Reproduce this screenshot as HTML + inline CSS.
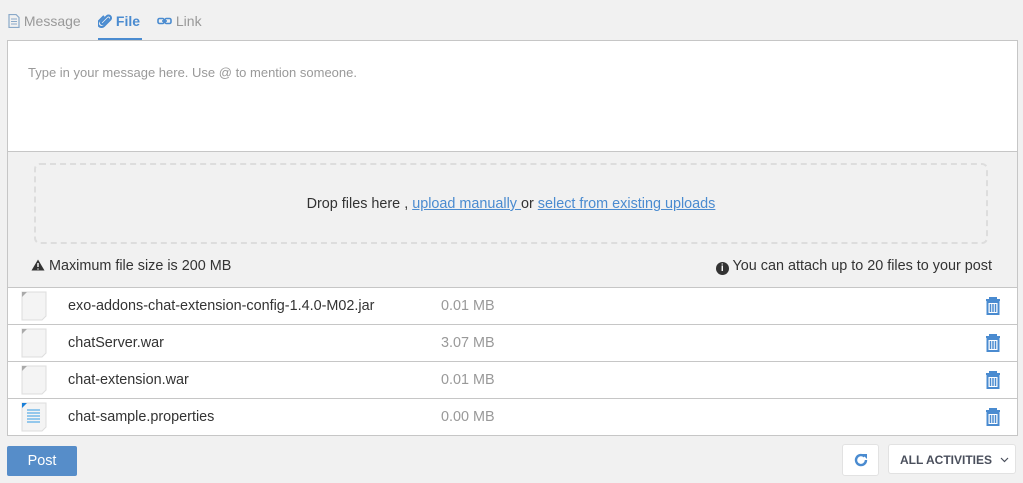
<!DOCTYPE html>
<html><head><style>
body{margin:0;background:#f1f1f1;font-family:"Liberation Sans",sans-serif;width:1023px;height:483px;position:relative;overflow:hidden;color:#333}
.abs{position:absolute}
.tab{position:absolute;top:13px;font-size:14px;color:#999}
.box{position:absolute;left:7px;top:40px;width:1009px;height:394px;border:1px solid #c6c6c6;background:#f1f1f1}
.ta{position:absolute;left:0;top:0;width:1009px;height:110px;background:#fff;border-bottom:1px solid #c6c6c6}
.row{position:absolute;left:0;width:1009px;height:36px;background:#fff;border-top:1px solid #c6c6c6;font-size:14.4px}
.row .n{position:absolute;left:60px;top:10px;color:#333}
.row .s{position:absolute;left:433px;top:10px;color:#999}
.row .ic{position:absolute;left:13px;top:3px}
.row .tr{position:absolute;left:977px;top:9px}
a{color:#4a8bd0;text-decoration:underline}
</style></head><body>
<div class="tab" style="left:8px"><svg width="12" height="14" style="vertical-align:-2px"><path d="M1 0.5h7l3 3v10h-10z" fill="none" stroke="#8aa9c9" stroke-width="1.2"/><path d="M3 5h6M3 7.5h6M3 10h6" stroke="#8aa9c9"/></svg> Message</div>
<div class="tab" style="left:98px;color:#4a8bd0;font-weight:bold"><svg width="14" height="14" style="vertical-align:-2px"><path d="M11 4L5 10a1.5 1.5 0 0 1-2-2l6-6a2.5 2.5 0 0 1 3.5 3.5L6 12a3.5 3.5 0 0 1-5-5l5-5" fill="none" stroke="#4a8bd0" stroke-width="2"/></svg> File</div>
<div class="abs" style="left:98px;top:38px;width:44px;height:3px;background:#4a8bd0"></div>
<div class="tab" style="left:157px"><svg width="15" height="10" style="vertical-align:0"><rect x="1" y="2.5" width="6" height="5" rx="1.5" fill="none" stroke="#4a8bd0" stroke-width="1.6"/><rect x="8" y="2.5" width="6" height="5" rx="1.5" fill="none" stroke="#4a8bd0" stroke-width="1.6"/><path d="M5 5h5" stroke="#4a8bd0" stroke-width="1.6"/></svg> Link</div>
<div class="box">
<div class="ta"><div class="abs" style="left:20px;top:24px;font-size:13px;color:#999">Type in your message here. Use @ to mention someone.</div></div>
<div class="abs" style="left:26px;top:122px;width:950px;height:77px;border:2px dashed #ddd;border-radius:6px;text-align:center;font-size:14.4px;line-height:79px">Drop files here , <a>upload manually </a> or <a>select from existing uploads</a></div>
<div class="abs" style="left:23px;top:217px;font-size:14.4px"><svg width="14" height="12" style="vertical-align:-1px"><path d="M7 0.5L13.5 11.5H0.5z" fill="#333"/><path d="M7 4v4M7 9.5v1" stroke="#fff" stroke-width="1.4"/></svg> Maximum file size is 200 MB</div>
<div class="abs" style="right:25px;top:217px;font-size:14.4px"><span style="display:inline-block;width:13px;height:13px;border-radius:50%;background:#333;color:#fff;font-size:10px;text-align:center;line-height:13px;font-weight:bold;vertical-align:-1px">i</span> You can attach up to 20 files to your post</div>
<div class="row" style="top:246px"><svg class="ic" width="26" height="30"><path d="M1 1h24v24l-4 4H1z" fill="#f4f4f4" stroke="#ddd"/><path d="M1 1h5l-5 5z" fill="#aaa"/></svg><span class="n">exo-addons-chat-extension-config-1.4.0-M02.jar</span><span class="s">0.01 MB</span><svg class="tr" width="16" height="18"><path d="M1 3h14M5 3V1h6v2M2.5 5h11v12h-11z" fill="none" stroke="#4a8bd0" stroke-width="2"/><path d="M5.5 7v8M8 7v8M10.5 7v8" stroke="#4a8bd0" stroke-width="1.5"/></svg></div>
<div class="row" style="top:283px"><svg class="ic" width="26" height="30"><path d="M1 1h24v24l-4 4H1z" fill="#f4f4f4" stroke="#ddd"/><path d="M1 1h5l-5 5z" fill="#aaa"/></svg><span class="n">chatServer.war</span><span class="s">3.07 MB</span><svg class="tr" width="16" height="18"><path d="M1 3h14M5 3V1h6v2M2.5 5h11v12h-11z" fill="none" stroke="#4a8bd0" stroke-width="2"/><path d="M5.5 7v8M8 7v8M10.5 7v8" stroke="#4a8bd0" stroke-width="1.5"/></svg></div>
<div class="row" style="top:320px"><svg class="ic" width="26" height="30"><path d="M1 1h24v24l-4 4H1z" fill="#f4f4f4" stroke="#ddd"/><path d="M1 1h5l-5 5z" fill="#aaa"/></svg><span class="n">chat-extension.war</span><span class="s">0.01 MB</span><svg class="tr" width="16" height="18"><path d="M1 3h14M5 3V1h6v2M2.5 5h11v12h-11z" fill="none" stroke="#4a8bd0" stroke-width="2"/><path d="M5.5 7v8M8 7v8M10.5 7v8" stroke="#4a8bd0" stroke-width="1.5"/></svg></div>
<div class="row" style="top:357px;height:37px"><svg class="ic" width="26" height="30"><path d="M1 1h24v24l-4 4H1z" fill="#f4f4f4" stroke="#ddd"/><path d="M1 1h5l-5 5z" fill="#1a7fd8"/><path d="M6 8h13M6 11h13M6 14h13M6 17h13M6 20h13" stroke="#5aaee8" stroke-width="1.3"/></svg><span class="n">chat-sample.properties</span><span class="s">0.00 MB</span><svg class="tr" width="16" height="18"><path d="M1 3h14M5 3V1h6v2M2.5 5h11v12h-11z" fill="none" stroke="#4a8bd0" stroke-width="2"/><path d="M5.5 7v8M8 7v8M10.5 7v8" stroke="#4a8bd0" stroke-width="1.5"/></svg></div>
</div>
<div class="abs" style="left:7px;top:435px;width:1011px;height:1px;background:#c6c6c6"></div>
<div class="abs" style="left:7px;top:446px;width:70px;height:30px;background:#568dc9;border-radius:2px;color:#fff;font-size:14.4px;text-align:center;line-height:30px">Post</div>
<div class="abs" style="left:842px;top:444px;width:35px;height:30px;background:#fff;border:1px solid #e2e2e2;border-radius:3px"><svg width="16" height="16" style="position:absolute;left:10px;top:7px"><path d="M13 8A5 5 0 1 1 11.5 4.5" fill="none" stroke="#4a8bd0" stroke-width="2.4"/><path d="M9 2h5v5z" fill="#4a8bd0"/></svg></div>
<div class="abs" style="left:888px;top:444px;width:128px;height:30px;background:#fff;border:1px solid #e2e2e2;border-radius:3px;font-size:12px;font-weight:bold;color:#4a4f5c;line-height:30px;padding-left:11px;box-sizing:border-box">ALL ACTIVITIES <svg width="9" height="6" style="margin-left:5px;vertical-align:1px"><path d="M1 1l3.5 3.5L8 1" fill="none" stroke="#4a4f5c" stroke-width="1.2"/></svg></div>
</body></html>
